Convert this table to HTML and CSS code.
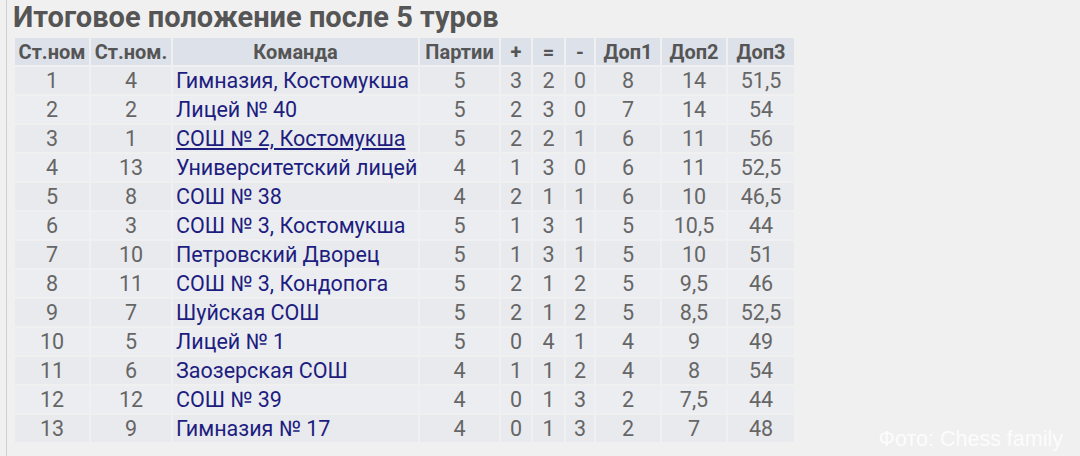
FILE: index.html
```html
<!DOCTYPE html>
<html lang="ru">
<head>
<meta charset="utf-8">
<link rel="stylesheet" href="styles.css">
</head>
<body>
<div class="page">
  <h2 class="title">Итоговое положение после 5 туров</h2>
  <table class="standings">
    <thead>
      <tr>
        <th class="c1">Ст.ном</th><th class="c2">Ст.ном.</th><th class="team">Команда</th><th class="c4">Партии</th><th class="c5">+</th><th class="c6">=</th><th class="c7">-</th><th class="c8">Доп1</th><th class="c9">Доп2</th><th class="c10">Доп3</th>
      </tr>
    </thead>
    <tbody>
      <tr><td>1</td><td>4</td><td class="team">Гимназия, Костомукша</td><td>5</td><td>3</td><td>2</td><td>0</td><td>8</td><td>14</td><td>51,5</td></tr>
      <tr><td>2</td><td>2</td><td class="team">Лицей № 40</td><td>5</td><td>2</td><td>3</td><td>0</td><td>7</td><td>14</td><td>54</td></tr>
      <tr><td>3</td><td>1</td><td class="team"><span class="link">СОШ № 2, Костомукша</span></td><td>5</td><td>2</td><td>2</td><td>1</td><td>6</td><td>11</td><td>56</td></tr>
      <tr><td>4</td><td>13</td><td class="team">Университетский лицей</td><td>4</td><td>1</td><td>3</td><td>0</td><td>6</td><td>11</td><td>52,5</td></tr>
      <tr><td>5</td><td>8</td><td class="team">СОШ № 38</td><td>4</td><td>2</td><td>1</td><td>1</td><td>6</td><td>10</td><td>46,5</td></tr>
      <tr><td>6</td><td>3</td><td class="team">СОШ № 3, Костомукша</td><td>5</td><td>1</td><td>3</td><td>1</td><td>5</td><td>10,5</td><td>44</td></tr>
      <tr><td>7</td><td>10</td><td class="team">Петровский Дворец</td><td>5</td><td>1</td><td>3</td><td>1</td><td>5</td><td>10</td><td>51</td></tr>
      <tr><td>8</td><td>11</td><td class="team">СОШ № 3, Кондопога</td><td>5</td><td>2</td><td>1</td><td>2</td><td>5</td><td>9,5</td><td>46</td></tr>
      <tr><td>9</td><td>7</td><td class="team">Шуйская СОШ</td><td>5</td><td>2</td><td>1</td><td>2</td><td>5</td><td>8,5</td><td>52,5</td></tr>
      <tr><td>10</td><td>5</td><td class="team">Лицей № 1</td><td>5</td><td>0</td><td>4</td><td>1</td><td>4</td><td>9</td><td>49</td></tr>
      <tr><td>11</td><td>6</td><td class="team">Заозерская СОШ</td><td>4</td><td>1</td><td>1</td><td>2</td><td>4</td><td>8</td><td>54</td></tr>
      <tr><td>12</td><td>12</td><td class="team">СОШ № 39</td><td>4</td><td>0</td><td>1</td><td>3</td><td>2</td><td>7,5</td><td>44</td></tr>
      <tr><td>13</td><td>9</td><td class="team">Гимназия № 17</td><td>4</td><td>0</td><td>1</td><td>3</td><td>2</td><td>7</td><td>48</td></tr>
    </tbody>
  </table>
  <div class="credit">Фото: Chess family</div>
</div>
</body>
</html>
```
FILE: styles.css
```css
html, body {
  margin: 0;
  padding: 0;
  background: #f0f0f0;
  height: 100%;
}
body {
  font-family: Roboto, "Noto Sans", sans-serif;
  overflow: hidden;
}
.page {
  position: relative;
  margin-left: 6px;
  border-left: 1px solid #cfcfcf;
  padding-left: 6px;
  height: 456px;
  box-sizing: border-box;
}
.title {
  margin: 0;
  padding-top: 1px;
  font-size: 29px;
  line-height: 32px;
  font-weight: 700;
  color: #555;
  height: 35px;
  white-space: nowrap;
}
.standings {
  border-collapse: separate;
  border-spacing: 2px;
  table-layout: fixed;
  width: 783px;
  font-size: 21.5px;
  color: #666;
}
.standings th {
  box-sizing: border-box;
  background: #dde1e9;
  color: #555;
  font-weight: 700;
  font-size: 20px;
  height: 27px;
  padding: 0;
  text-align: center;
  white-space: nowrap;
}
.standings td {
  height: 27px;
  padding: 0;
  text-align: center;
  background: #e9eaee;
  line-height: 27px;
  white-space: nowrap;
}
.standings tbody tr:nth-child(even) td {
  background: #ecedf1;
}
.standings td.team {
  text-align: left;
  color: #1d1d80;
  padding-left: 3px;
}
.link {
  text-decoration: underline;
}
.c1 { width: 74px; }
.c2 { width: 80px; }
.team { width: 245px; }
.c4 { width: 79px; }
.c5 { width: 30px; }
.c6 { width: 31px; }
.c7 { width: 28px; }
.c8 { width: 64px; }
.c9 { width: 64px; }
.c10 { width: 66px; }
.credit {
  position: absolute;
  right: 17px;
  bottom: 4px;
  font-family: "Liberation Sans", Arial, sans-serif;
  font-size: 21.5px;
  color: rgba(255,255,255,0.85);
}
```
